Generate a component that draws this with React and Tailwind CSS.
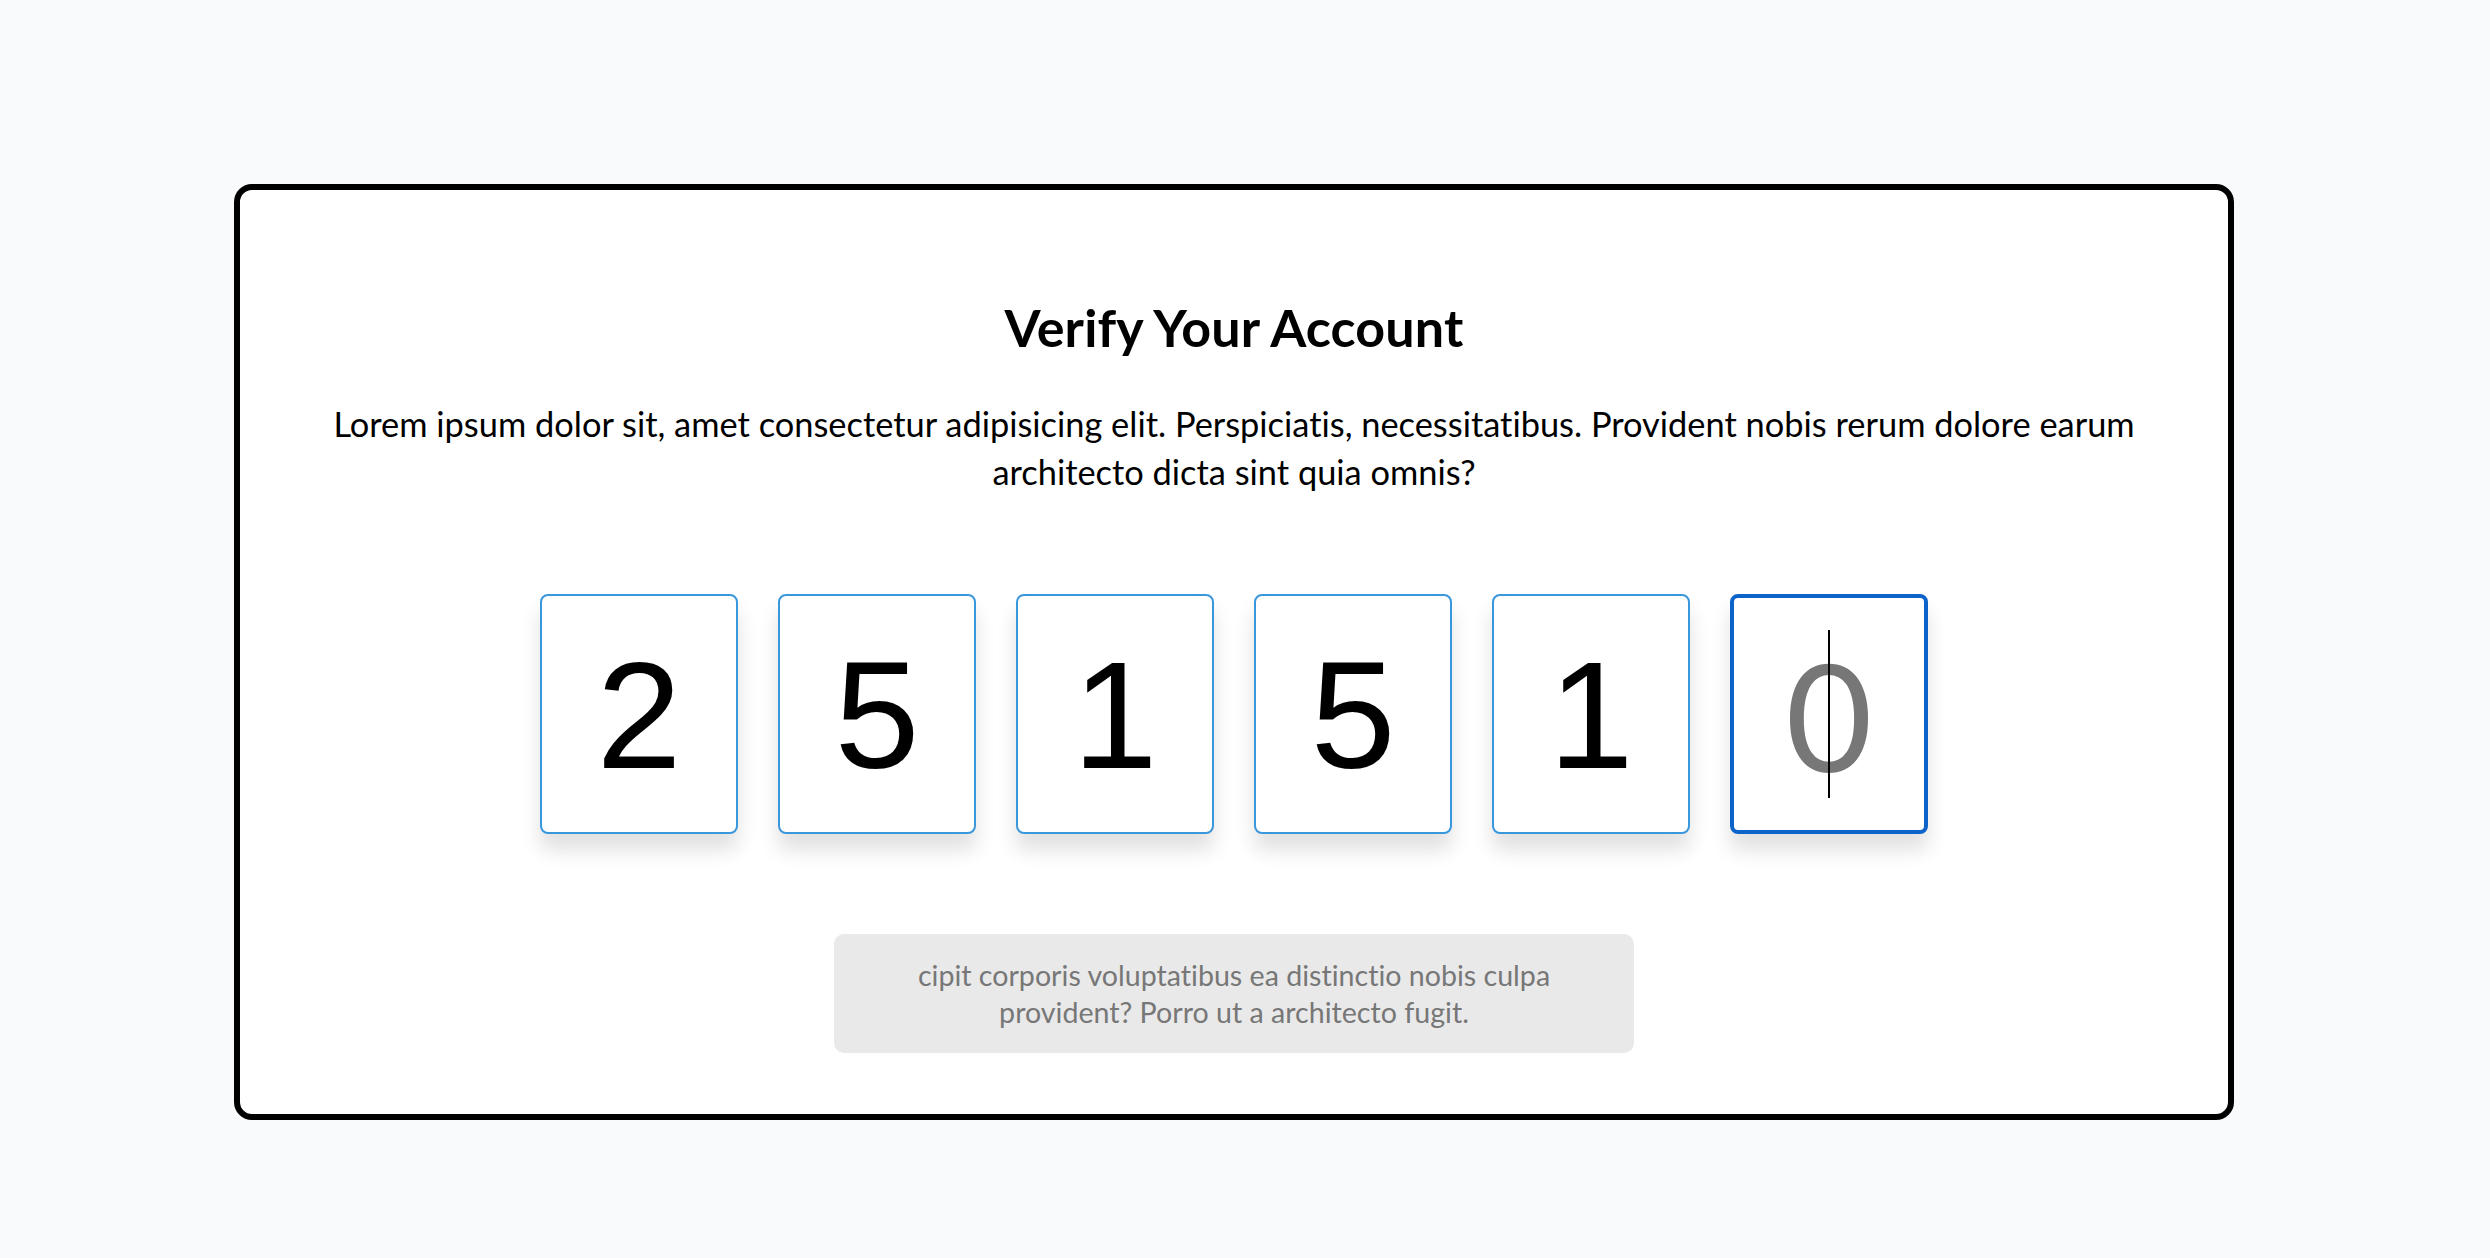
import React from 'react';

const digits = ['2', '5', '1', '5', '1'];

export default function App() {
  return (
    <div className="min-h-screen bg-[#f9fafc] pt-[184px] pl-[234px] [font-variant-ligatures:none]" style={{ fontFamily: 'Lato, sans-serif' }}>
      {/* Card */}
      <div className="w-[2000px] h-[936px] bg-white border-[6px] border-black rounded-[18px] flex flex-col items-center pt-[111px]">
        <h1 className="text-[52px] leading-none font-bold text-black tracking-[0.003em]">Verify Your Account</h1>
        <p className="mt-[47px] w-[1840px] text-center text-[34.4px] leading-[48px] text-black">
          Lorem ipsum dolor sit, amet consectetur adipisicing elit. Perspiciatis, necessitatibus. Provident nobis rerum dolore earum architecto dicta sint quia omnis?
        </p>

        {/* Code inputs */}
        <div className="mt-[98px] flex gap-[40px]">
          {digits.map((d, i) => (
            <div
              key={i}
              className="w-[198px] h-[240px] bg-white border-2 border-[#3b97dc] rounded-[8px] flex items-center justify-center shadow-[0_16px_20px_rgba(0,0,0,0.12)]"
            >
              <span className="text-[153px] leading-none text-black" style={{ fontFamily: '"Liberation Sans", Arial, sans-serif' }}>{d}</span>
            </div>
          ))}
          <div className="relative w-[198px] h-[240px] bg-white border-4 border-[#0d63c9] rounded-[8px] flex items-center justify-center shadow-[0_16px_20px_rgba(0,0,0,0.12)]">
            <span className="text-[150px] leading-none text-[#777777]">0</span>
            <div className="absolute left-1/2 top-[32px] w-[2px] h-[168px] -ml-px bg-black" />
          </div>
        </div>

        {/* Hint */}
        <div className="mt-[100px] w-[800px] h-[119px] bg-[#e9e9e9] rounded-[10px] flex items-center justify-center px-[80px]">
          <p className="text-center text-[28.6px] leading-[37px] text-[#777777]">
            cipit corporis voluptatibus ea distinctio nobis culpa provident? Porro ut a architecto fugit.
          </p>
        </div>
      </div>
    </div>
  );
}
